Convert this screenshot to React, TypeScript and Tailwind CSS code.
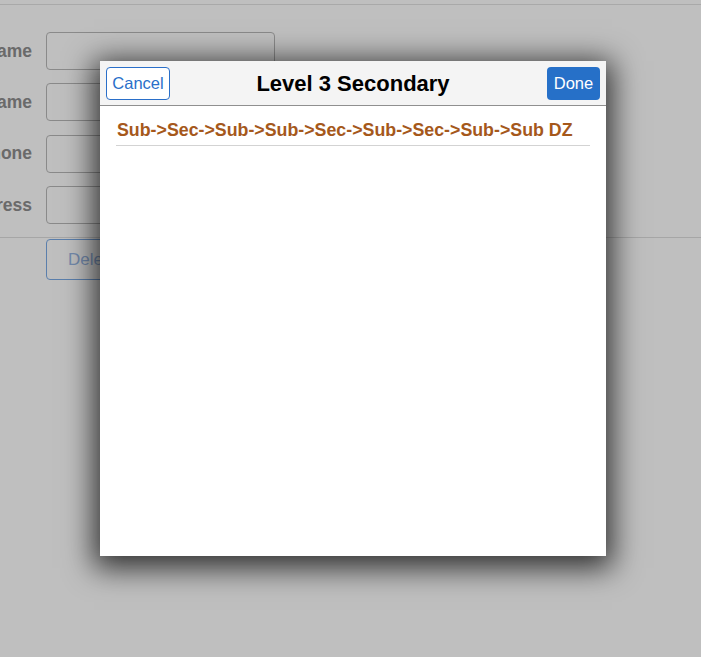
export default function App() {
  const rows = ["First Name", "Last Name", "Phone", "Address"];
  return (
    <div className="relative h-[657px] w-[701px] overflow-hidden bg-white font-['Liberation_Sans',Arial,sans-serif]">
      {/* Page behind the modal */}
      <div className="pt-[4px]">
        <div className="border-t border-[#e2e2e2]" />
        <div className="ml-[-88px] flex flex-col gap-[13.3px] pt-[27px]">
          {rows.map((r) => (
            <div key={r} className="flex items-center gap-[14px]">
              <label className="w-[120px] text-right text-[17.5px] font-bold text-[#8e8e8e]">{r}</label>
              <div className="h-[38px] w-[229px] rounded-[4px] border border-[#b8b8b8] bg-white" />
            </div>
          ))}
        </div>
        <div className="mt-[13px] border-t border-[#dedede]" />
        <div className="pl-[46px] pt-[1px]">
          <button className="h-[41px] w-[120px] rounded-[4px] border border-[#7aaae6] pl-[21px] text-left text-[17px] text-[#9ab8e6]">
            Delete
          </button>
        </div>
      </div>

      {/* Dim overlay */}
      <div className="absolute inset-0 bg-black/25" />

      {/* Modal */}
      <div className="absolute left-[100px] top-[61px] flex h-[495px] w-[506px] flex-col bg-white shadow-[0_6px_28px_6px_rgba(0,0,0,0.75)]">
        <div className="grid h-[45px] grid-cols-[1fr_auto_1fr] items-center border-b border-[#8f8f8f] bg-[#f4f4f4] px-[6px]">
          <div>
            <button className="h-[33px] w-[64px] rounded-[4px] border border-[#2a6fc9] bg-white text-[16.5px] text-[#2a6fc9]">
              Cancel
            </button>
          </div>
          <h1 className="text-[22px] font-bold text-black">Level 3 Secondary</h1>
          <div className="flex justify-end">
            <button className="h-[33px] w-[53px] rounded-[4px] bg-[#2670c8] text-[16.5px] text-white">Done</button>
          </div>
        </div>
        <div className="px-[16px] pt-[15px]">
          <div className="border-b border-[#d3d3d3] pb-[5px] pl-[1px] text-[17.8px] font-bold leading-[19px] text-[#a5581b]">
            Sub-&gt;Sec-&gt;Sub-&gt;Sub-&gt;Sec-&gt;Sub-&gt;Sec-&gt;Sub-&gt;Sub DZ
          </div>
        </div>
      </div>
    </div>
  );
}
